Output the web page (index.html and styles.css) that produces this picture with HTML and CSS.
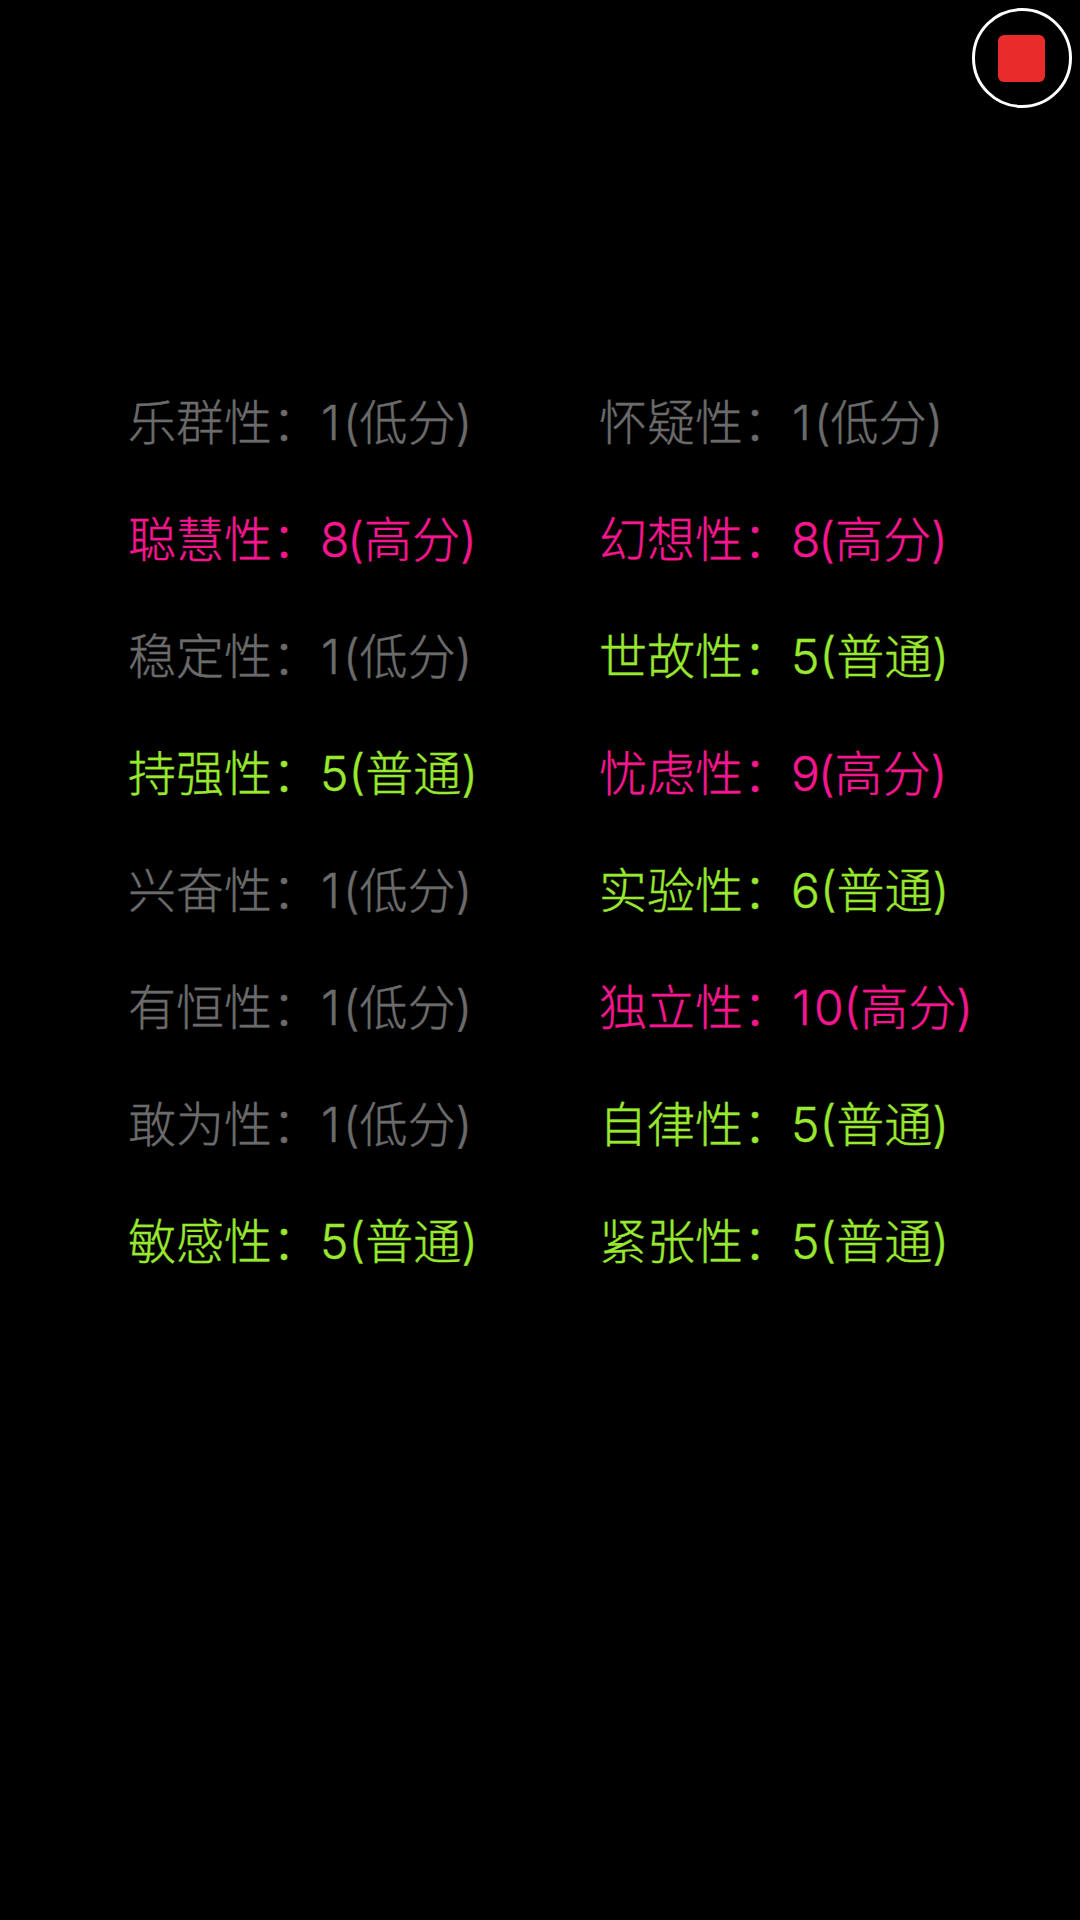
FILE: index.html
```html
<!DOCTYPE html>
<html lang="zh-CN">
<head>
<meta charset="utf-8">
<title>性格测试结果</title>
<link rel="stylesheet" href="styles.css">
</head>
<body>
<button class="record" type="button" aria-label="停止录制"><span class="record-stop"></span></button>
<main class="traits">
  <div class="trait low"><span class="name">乐群性：</span><span><span class="one">1</span>(低分)</span></div>
  <div class="trait low"><span class="name">怀疑性：</span><span><span class="one">1</span>(低分)</span></div>
  <div class="trait high"><span class="name">聪慧性：</span><span><span class="tight">8</span>(高分)</span></div>
  <div class="trait high"><span class="name">幻想性：</span><span><span class="tight">8</span>(高分)</span></div>
  <div class="trait low"><span class="name">稳定性：</span><span><span class="one">1</span>(低分)</span></div>
  <div class="trait mid"><span class="name">世故性：</span><span>5(普通)</span></div>
  <div class="trait mid"><span class="name">持强性：</span><span>5(普通)</span></div>
  <div class="trait high"><span class="name">忧虑性：</span><span><span class="tight">9</span>(高分)</span></div>
  <div class="trait low"><span class="name">兴奋性：</span><span><span class="one">1</span>(低分)</span></div>
  <div class="trait mid"><span class="name">实验性：</span><span>6(普通)</span></div>
  <div class="trait low"><span class="name">有恒性：</span><span><span class="one">1</span>(低分)</span></div>
  <div class="trait high"><span class="name">独立性：</span><span><span class="one">1</span>0(高分)</span></div>
  <div class="trait low"><span class="name">敢为性：</span><span><span class="one">1</span>(低分)</span></div>
  <div class="trait mid"><span class="name">自律性：</span><span>5(普通)</span></div>
  <div class="trait mid"><span class="name">敏感性：</span><span>5(普通)</span></div>
  <div class="trait mid"><span class="name">紧张性：</span><span>5(普通)</span></div>
</main>
</body>
</html>
```
FILE: styles.css
```css
html, body {
  margin: 0;
  height: 100%;
  background: #000;
}
body {
  position: relative;
  width: 1080px;
  height: 1920px;
  overflow: hidden;
  font-family: Inter, "Noto Sans CJK SC", sans-serif;
  font-weight: 300;
  font-size: 48px;
  -webkit-text-stroke: 0.4px currentColor;
}
.record {
  position: absolute;
  top: 8px;
  left: 971.5px;
  width: 100px;
  height: 100px;
  padding: 0;
  box-sizing: border-box;
  border: 3px solid #fff;
  border-radius: 50%;
  background: transparent;
  display: flex;
  align-items: center;
  justify-content: center;
}
.record-stop {
  width: 47px;
  height: 47px;
  border-radius: 6px;
  background: #e92b2b;
}
.traits {
  display: grid;
  grid-template-columns: 471px 471px;
  grid-auto-rows: 117px;
  padding: 360px 0 0 128px;
}
.trait {
  display: flex;
  align-items: center;
  white-space: nowrap;
}
.one { margin: 0 3px 0 1px; }
.tight { margin-right: -2px; }
.low { color: #6b6b6b; }
.high { color: #f5178f; }
.mid { color: #9ae82f; }
```
